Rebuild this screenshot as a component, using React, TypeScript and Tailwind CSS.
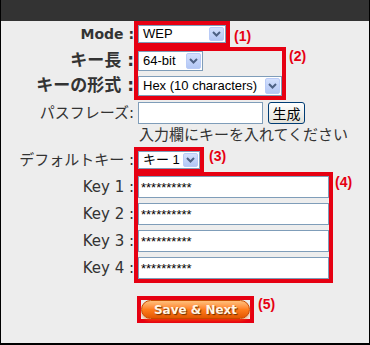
import React from 'react';

const font = "font-['DejaVu_Sans','Noto_Sans_CJK_JP',sans-serif]";

function Chevron() {
  return (
    <svg width="9" height="6" viewBox="0 0 9 6" fill="none">
      <path d="M1 1 L4.5 4.5 L8 1" stroke="#4d6185" strokeWidth="2" />
    </svg>
  );
}

function Select({ text, className }: { text: string; className: string }) {
  return (
    <div className={`flex bg-white border border-[#7f9db9] ${className}`}>
      <span className="flex-1 flex items-center pl-[4px] text-[13px] text-black font-['Liberation_Sans','Noto_Sans_CJK_JP',sans-serif] whitespace-nowrap">
        {text}
      </span>
      <span className="w-[15px] my-[1px] mr-[1px] rounded-[2px] border border-[#b9cbf7] bg-linear-to-b from-[#d3e0fd] to-[#b3c7f5] flex items-center justify-center">
        <Chevron />
      </span>
    </div>
  );
}

function Box({ children, className = '' }: { children: React.ReactNode; className?: string }) {
  return <div className={`border-4 border-[#e60012] ${className}`}>{children}</div>;
}

function Num({ children, className = '' }: { children: React.ReactNode; className?: string }) {
  return (
    <span className={`text-[14px] leading-[16px] font-bold text-[#e60012] font-['Liberation_Sans',sans-serif] ${className}`}>
      {children}
    </span>
  );
}

function KeyInput() {
  return (
    <div className="w-[191px] h-[22px] bg-white border border-[#7f9db9] flex items-center pl-[2px] text-[13px] text-black font-['Liberation_Sans',sans-serif] leading-none">
      **********
    </div>
  );
}

export default function App() {
  const label = 'w-[133px] flex justify-end items-center whitespace-nowrap text-[#333]';
  const keys = ['Key 1 :', 'Key 2 :', 'Key 3 :', 'Key 4 :'];

  return (
    <div className={`w-[370px] h-[345px] bg-[#ededed] border-x border-b-2 border-black flex flex-col overflow-hidden ${font}`}>
      <div className="h-[21px] bg-[#333333] -mx-px shrink-0" />

      {/* mode */}
      <div className="flex items-start">
        <div className={`${label} h-[26px] text-[14px] font-bold`}>Mode :</div>
        <Box>
          <Select text="WEP" className="w-[88px] h-[18px]" />
        </Box>
        <Num className="ml-[4px] mt-[7px]">(1)</Num>
      </div>

      {/* key length / format */}
      <div className="flex items-start">
        <div className="w-[133px] flex flex-col pt-[4px] gap-[5px] text-[17px] font-semibold">
          <div className={`${label} h-[20px]`}>キー長 :</div>
          <div className={`${label} h-[20px]`}>キーの形式 :</div>
        </div>
        <Box className="flex flex-col gap-[5px]">
          <Select text="64-bit" className="w-[65px] h-[20px]" />
          <Select text="Hex (10 characters)" className="w-[144px] h-[20px]" />
        </Box>
        <Num className="ml-[3px] mt-[1px]">(2)</Num>
      </div>

      {/* passphrase */}
      <div className="flex items-center mt-[2px]">
        <div className={`${label} h-[22px] text-[15px]`}>パスフレーズ:</div>
        <div className="flex items-center gap-[5px] pl-[4px]">
          <div className="w-[125px] h-[22px] bg-white border border-[#7f9db9]" />
          <button className="w-[37px] h-[22px] rounded-[3px] border border-[#003c74] bg-linear-to-b from-white to-[#e2e1d9] text-[14px] leading-none text-black font-['Noto_Sans_CJK_JP',sans-serif]">
            生成
          </button>
        </div>
      </div>

      <div className="h-[23px] pl-[138px] text-[15px] leading-[23px] text-[#333] whitespace-nowrap">
        入力欄にキーを入れてください
      </div>

      {/* default key */}
      <div className="flex items-start">
        <div className={`${label} h-[26px] text-[15px]`}>デフォルトキー :</div>
        <Box>
          <Select text="キー 1" className="w-[62px] h-[18px]" />
        </Box>
        <Num className="ml-[5px] mt-[1px]">(3)</Num>
      </div>

      {/* keys */}
      <div className="flex items-start -mt-px">
        <div className="w-[133px] flex flex-col pt-[4px] gap-[5px] text-[15px]">
          {keys.map((k) => (
            <div key={k} className={`${label} h-[22px]`}>
              {k}
            </div>
          ))}
        </div>
        <Box className="flex flex-col gap-[5px]">
          {keys.map((k) => (
            <KeyInput key={k} />
          ))}
        </Box>
        <Num className="ml-[2px] mt-[2px]">(4)</Num>
      </div>

      {/* save */}
      <div className="flex items-start mt-[13px] pl-[136px]">
        <Box>
          <button className="w-[109px] h-[19px] rounded-full border border-[#c84a00] bg-linear-to-b from-[#ffc07a] via-[#ff7d1c] to-[#e35600] shadow-[0_2px_3px_rgba(255,110,0,0.45)] flex items-center justify-center">
            <span className="text-[12px] leading-none font-bold text-[#fff6e6] font-['DejaVu_Sans',sans-serif] [text-shadow:1px_1px_1px_#6b2f00]">
              Save &amp; Next
            </span>
          </button>
        </Box>
        <Num className="ml-[4px] mt-0">(5)</Num>
      </div>
    </div>
  );
}
